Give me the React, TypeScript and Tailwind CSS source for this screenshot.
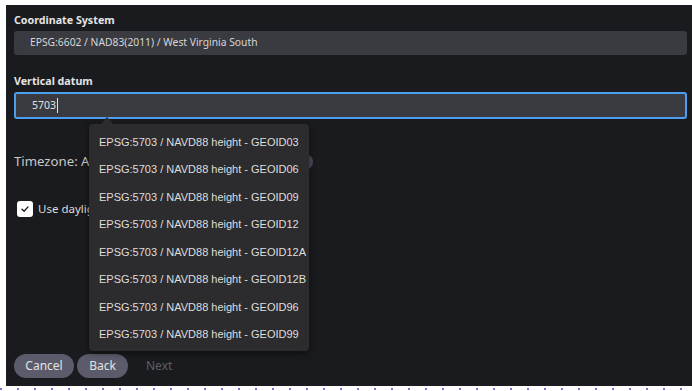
import React from "react";

const items = ["GEOID03", "GEOID06", "GEOID09", "GEOID12", "GEOID12A", "GEOID12B", "GEOID96", "GEOID99"];

export default function App() {
  return (
    <div className="w-[692px] h-[391px] bg-white overflow-hidden relative" style={{ fontFamily: '"Noto Sans", sans-serif' }}>
      <div className="ml-[6px] mt-[5px] h-[381px] bg-[#1a1b1e] pl-2 pr-[5px] pt-[8px] relative">
        {/* Coordinate system */}
        <div className="text-[10.7px] font-bold text-[#e4e4e4] leading-[14px]">Coordinate System</div>
        <div className="mt-[4px] h-[24px] rounded-[3px] bg-[#3a3a41] flex items-center pl-4 text-[10.3px] text-[#d6d6d6]">
          EPSG:6602 / NAD83(2011) / West Virginia South
        </div>

        {/* Vertical datum */}
        <div className="mt-[19px] text-[10.7px] font-bold text-[#e4e4e4] leading-[14px]">Vertical datum</div>
        <div className="mt-[4px] h-[27px] rounded-[3px] bg-[#3a3a41] border-2 border-[#4b9ef0] flex items-center pl-4 text-[10.5px] text-[#e0e0e0]">
          5703<span className="inline-block w-px h-[15px] bg-[#e0e0e0] ml-px" />
        </div>

        {/* Timezone */}
        <div className="mt-[34px] flex items-center h-[18px]">
          <span className="w-[75px] overflow-hidden whitespace-nowrap text-[13.2px] text-[#c8c8c8]">Timezone: America/New_York</span>
          <div className="ml-auto mr-[374px] w-[110px] h-[16px] rounded-full bg-[#4a4a5c]" />
        </div>

        {/* Daylight */}
        <div className="mt-[29px] ml-[3px] flex items-center gap-[5px]">
          <div className="w-[16px] h-[16px] rounded-[3px] bg-white flex items-center justify-center">
            <svg width="10" height="10" viewBox="0 0 10 10" fill="none">
              <path d="M2 5.2 L4.1 7.2 L8 2.9" stroke="#1a1b1e" strokeWidth="1.4" strokeLinecap="round" strokeLinejoin="round" />
            </svg>
          </div>
          <span className="w-[51px] overflow-hidden whitespace-nowrap text-[11.5px] text-[#dcdcdc]">Use daylight saving time</span>
        </div>

        {/* Buttons */}
        <div className="absolute left-2 top-[349px] flex items-center gap-[3px]">
          <button className="h-[24px] w-[60px] rounded-full bg-[#5b5b6c] text-[12px] text-[#e2e2e2]">Cancel</button>
          <button className="h-[24px] w-[51px] rounded-full bg-[#5b5b6c] text-[12px] text-[#e2e2e2]">Back</button>
          <span className="ml-[15px] text-[12px] text-[#5e5e66]">Next</span>
        </div>

        {/* Dropdown */}
        <div className="absolute left-[83px] top-[119px] w-[220px]">
          <svg className="absolute left-[11px] -top-[7px]" width="14" height="8" viewBox="0 0 14 8">
            <path d="M0 8 L7 0 L14 8 Z" fill="#2c2c2f" />
          </svg>
          <div className="rounded-[4px] bg-[#2c2c2f] pt-[4px] pb-[3px] shadow-[0_2px_6px_rgba(0,0,0,0.5)]" style={{ fontFamily: '"Liberation Sans", Arial, sans-serif' }}>
            {items.map((g) => (
              <div key={g} className="h-[27.5px] flex items-center pl-[10px] text-[11px] text-[#dedede]">
                EPSG:5703 / NAVD88 height - {g}
              </div>
            ))}
          </div>
        </div>
      </div>

      {/* dotted strip */}
      <div className="flex mt-[2px]">
        {Array.from({ length: 41 }).map((_, i) => (
          <div key={i} className="w-[17px] shrink-0">
            <div className="w-[2px] h-[2px] bg-[#7a72dc]" />
          </div>
        ))}
      </div>
    </div>
  );
}
